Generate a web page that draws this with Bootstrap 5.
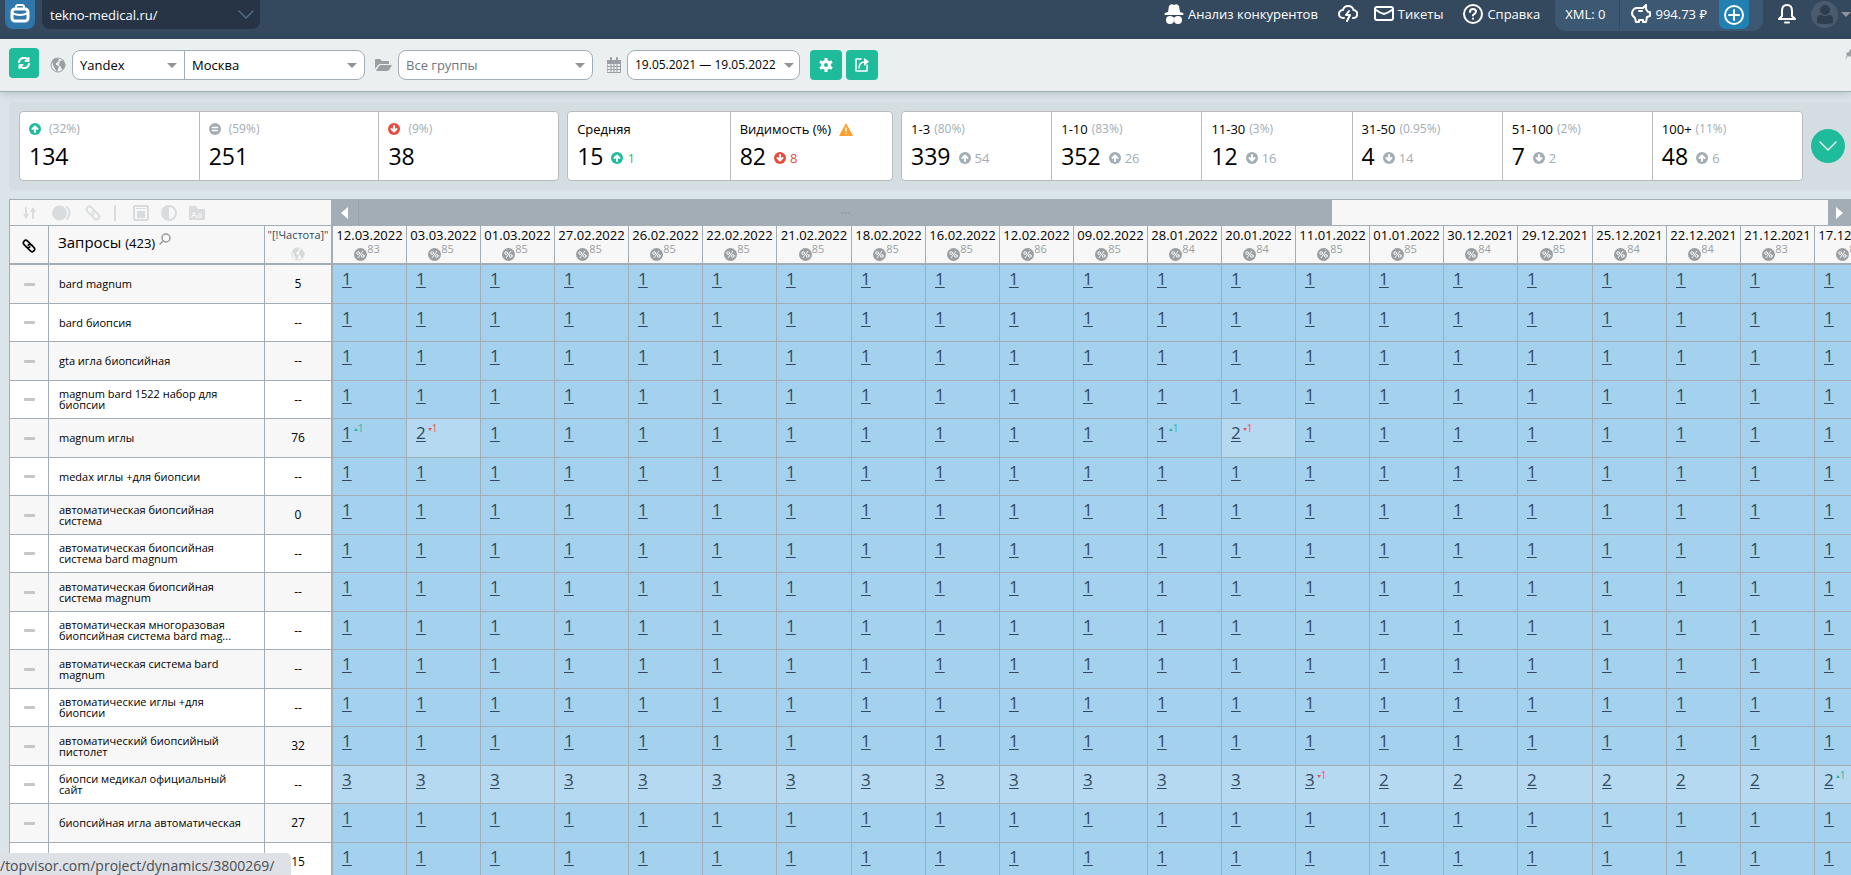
<!DOCTYPE html>
<html lang="ru">
<head>
<meta charset="utf-8">
<meta name="viewport" content="width=device-width, initial-scale=1">
<title>Динамика позиций</title>
<link href="https://cdn.jsdelivr.net/npm/bootstrap@5.3.0/dist/css/bootstrap.min.css" rel="stylesheet">
<style>
  :root { --line:#a2adb5; --teal:#1fbc9c; --navy:#34495e; }
  body { font-family:"Open Sans","Noto Sans",sans-serif; font-size:13px; line-height:18px; color:#000; background:#dbe4e9; }
  svg { display:block; flex:none; fill:none; stroke:currentColor; stroke-width:2; stroke-linecap:round; stroke-linejoin:round; }
  svg .solid { fill:currentColor; stroke:none; }
  button { border:0; padding:0; background:none; color:inherit; }
  .pick { appearance:none; border:0; background:transparent; padding:0; width:100%; outline:0; color:#000; }
  .tri { width:0; height:0; border:5px solid transparent; border-bottom:0; border-top-color:#8f9499; flex:none; pointer-events:none; }

  .topbar { height:39px; background:var(--navy); color:#fff; padding-left:5px; }
  .topbar a { color:#fff; text-decoration:none; }
  .topbar .band { height:28px; white-space:nowrap; }
  .home-btn { width:30px; height:29px; background:#2f76ab; border-radius:0 0 8px 8px; }
  .project { width:218px; height:29px; margin-left:7px; background:#263445; border-radius:0 0 8px 8px; padding:0 6px 0 8px; }
  .project .pick { color:#fff; }
  .project .chev { color:#4f6b88; }
  .project option { color:#000; }
  .menu { gap:20px; margin-right:15px; }
  .wallet { height:31px; background:#3d5872; border-radius:0 0 10px 10px; padding:0 14px 0 10px; }
  .wallet .sum { border-left:1px solid var(--navy); height:29px; padding-left:11px; margin-left:14px; gap:12px; }
  .plus-btn { width:30px; height:29px; background:#2181b3; border-radius:0 0 7px 7px; color:#fff; }
  .bell { margin:0 14px; }
  .avatar { width:27px; height:27px; margin:1px 3px 0 0; border-radius:50%; background:#4a5b6d; color:#2c3e50; overflow:hidden; }

  .filters { height:53px; background:#ebefef; border-bottom:1px solid #9fb0b3; box-shadow:0 2px 8px #00000026; padding:9px 0 0 9px; color:#9a9fa3; position:relative; }
  .filters .tuned { margin:2px 0 0 11px; gap:6px; }
  .sq-btn { height:30px; width:32px; background:var(--teal); color:#fff; border-radius:4px; }
  .sq-btn.refresh { width:30px; }
  .box { height:30px; border:1px solid var(--line); border-radius:8px; background:#fff; }
  .box > .part { padding:0 7px 0 7px; height:28px; flex:1 1 0; min-width:0; }
  .box > .part + .part { border-left:1px solid var(--line); }
  .box-place { width:293px; } .box-place > .engine { flex:0 0 111px; }
  .box-group { width:195px; } .box-group .pick { color:#71777c; }
  .box-dates { width:173px; } .box-dates .part { padding-right:5px; } .box-dates .pick { font-size:12px; }
  .pin { position:absolute; right:-5px; top:9px; }

  .summary { background:#d4dde2; margin:10px 0 0 9px; padding:9px 6px 9px 10px; border-radius:4px 0 0 4px; gap:8px; }
  .set { background:#fff; border:1px solid #bbb; border-radius:4px; height:70px; }
  .set > div { flex:1 1 0; padding:8px 0 0 9px; min-width:0; white-space:nowrap; }
  .set > div + div { border-left:1px solid #bbb; }
  .set-a { flex:540 1 0; } .set-b { flex:325 1 0; } .set-c { flex:903 1 0; }
  .pct { color:#a2adb5; font-size:12px; margin-left:4px; }
  .lbl { font-weight:500; }
  .big { font-size:23px; line-height:36px; font-weight:500; }
  .t-up { color:#1fbc9c; } .t-down { color:#e74c3c; } .t-mute { color:#a2adb5; } .t-warn { color:#ff9f30; }
  .more-btn { width:34px; height:34px; border-radius:50%; background:var(--teal); color:#fff; }

  .board { margin:9px 0 0 9px; border-left:1px solid var(--line); overflow:hidden; }
  .tools { height:27px; border-top:1px solid var(--line); border-bottom:1px solid var(--line); background:#f7f7f7; color:#d9dcde; }
  .tools .left { width:321px; padding-left:13px; gap:12px; flex:none; }
  .bar-thumb { background:var(--line); color:#8d979e; flex:974 1 0; }
  .bar-rest { flex:496 1 0; }
  .bar-end { background:var(--line); color:#fff; flex:none; }
  .bar-end.first { width:28px; border-right:1px solid #97a2a8; }
  .bar-end.last { width:23px; }

  .grid { table-layout:fixed; border-collapse:separate; border-spacing:0; width:1879px; }
  .w-check { width:39px; } .w-name { width:216px; } .w-freq { width:68px; } .w-day { width:74px; } .w-day:nth-child(10n) { width:75px; }
  .grid th, .grid td { border-right:1px solid var(--line); border-bottom:1px solid var(--line); padding:0; font-weight:400; overflow:hidden; }
  .grid thead th { height:39px; border-bottom-width:2px; background:#f7f7f7; vertical-align:top; }
  .grid .c-freq { border-right-width:2px; text-align:center; }
  .grid tbody tr { height:38px; background:#fff; }
  .grid tbody tr:nth-child(odd) { height:39px; background:#f7f7f7; }
  .grid tbody .c-name { font-size:11px; line-height:11px; padding:0 16px 1px 10px; vertical-align:middle; }
  .grid thead .c-name { font-size:15px; font-weight:500; padding:7px 0 0 9px; }
  .grid thead .c-name small { font-size:13px; }
  .grid thead .c-name svg { color:#999; }
  .grid thead .c-freq { font-size:11px; line-height:17px; color:#34495e; white-space:nowrap; }
  .grid thead .c-freq svg { color:#d5d8d9; }
  .grid tbody .c-freq { font-size:12px; vertical-align:middle; }
  .grid .day { text-align:center; white-space:nowrap; }
  .grid .vis { color:#9a9fa3; font-size:11px; line-height:10px; padding-right:5px; }
  .grid .pos { background:#a4d1ee; vertical-align:top; padding:3px 0 0 9px; line-height:22px; }
  .grid .pos.low { background:#b5d9f0; }
  .pos a { color:#34495e; font-size:17px; text-decoration:underline; text-underline-offset:2px; text-decoration-thickness:1px; }
  .delta { font-size:10px; line-height:10px; margin:1px 0 0 2px; }
  .delta::before { content:""; width:0; height:0; border:2px solid transparent; margin-top:5px; }
  .delta.up { color:#2fb5a0; } .delta.up::before { border-top:0; border-bottom:3px solid; }
  .delta.down { color:#f0525a; } .delta.down::before { border-bottom:0; border-top:3px solid; }
  .dash { width:11px; height:3px; background:#c4c6c7; border-radius:1px; margin:0 auto; }
  .status { position:fixed; left:0; bottom:0; width:291px; height:22px; background:#dee1e6; border-radius:0 5px 0 0; color:#4a4d51; font-size:14px; line-height:26px; z-index:5; white-space:nowrap; }
</style>
</head>
<body class="vh-100 overflow-hidden">

<svg width="0" height="0" class="position-absolute" aria-hidden="true">
  <symbol id="i-up" viewBox="0 0 12 12"><circle class="solid" cx="6" cy="6" r="6"/><path stroke="#fff" d="M6 9V4M3.500 6L6 3.500 8.500 6"/></symbol>
  <symbol id="i-down" viewBox="0 0 12 12"><circle class="solid" cx="6" cy="6" r="6"/><path stroke="#fff" d="M6 3v5M3.500 6L6 8.500 8.500 6"/></symbol>
  <symbol id="i-same" viewBox="0 0 12 12"><circle class="solid" cx="6" cy="6" r="6"/><path stroke="#fff" stroke-width="1.500" d="M3.500 4.500h5M3.500 7.500h5"/></symbol>
  <symbol id="i-globe" viewBox="0 0 16 16"><circle cx="8" cy="8" r="7" stroke-width="1"/><path class="solid" d="M2 4l3-3 4 1-1 3-2 1v2l3 1-1 3-1 3-2-3-2-4zM10 4l3-1 2 4-1 4-2 2-1-3-2-2z"/></symbol>
  <symbol id="i-pct" viewBox="0 0 14 14"><circle class="solid" cx="7" cy="7" r="7"/><path stroke="#fff" stroke-width="1" d="M9.500 3.500l-5 7"/><circle cx="4.500" cy="5.500" r="1.500" stroke="#fff" stroke-width="1"/><circle cx="9.500" cy="8.500" r="1.500" stroke="#fff" stroke-width="1"/></symbol>
  <symbol id="i-link" viewBox="0 0 18 18"><g transform="rotate(45 9 9)" stroke-width="1.800"><path d="M9 6.200H4a2.800 2.800 0 0 0 0 5.600h3.500M9 11.800h5a2.800 2.800 0 0 0 0-5.600h-3.500"/><path d="M7.500 11.800a2.800 2.800 0 0 0 2.800-2.800M10.500 6.200A2.800 2.800 0 0 0 7.700 9"/></g></symbol>
</svg>

<header class="topbar d-flex align-items-start">
  <button class="home-btn d-flex justify-content-center pt-1" aria-label="Проекты">
    <svg width="20" height="20" viewBox="0 0 20 20"><rect x="2" y="5" width="16" height="12" rx="3" stroke-width="3"/><path d="M6 4V3q0-2 2-2h4q2 0 2 2v1M2 9q8 4 16 0"/></svg>
  </button>
  <div class="project d-flex align-items-center">
    <select class="pick" aria-label="Проект"><option>tekno-medical.ru/</option></select>
    <svg class="chev" width="16" height="10" viewBox="0 0 16 10"><path stroke-width="1.500" d="M1 1l7 7 7-7"/></svg>
  </div>
  <nav class="d-flex align-items-start ms-auto" aria-label="Меню">
    <div class="menu d-flex">
      <a href="#" class="band d-flex align-items-center gap-1">
        <svg width="20" height="20" viewBox="0 0 20 20"><path class="solid" d="M5 2q2-3 5-1 3-2 5 1l1 6 3 1q1 1 0 2H1q-1-1 0-2l3-1z"/><circle class="solid" cx="6" cy="16" r="4"/><circle class="solid" cx="14" cy="16" r="4"/><path stroke-width="1" d="M8 14h4"/></svg>
        <span>Анализ конкурентов</span></a>
      <div class="d-flex gap-3">
        <a href="#" class="band d-flex align-items-center" aria-label="Обновления">
          <svg width="20" height="18" viewBox="0 0 20 18"><path d="M6 13H5a4 4 0 0 1 0-8q1-4 5-4 4.500 0 5.500 4A4 4 0 0 1 15 13"/><path d="M11 6l-3 4h4l-3 6"/></svg></a>
        <a href="#" class="band d-flex align-items-center gap-1">
          <svg width="20" height="16" viewBox="0 0 20 16"><rect x="1" y="1" width="18" height="13" rx="2"/><path d="M2 4q4 3 8 4 4-1 8-4"/></svg>
          <span>Тикеты</span></a>
      </div>
      <a href="#" class="band d-flex align-items-center gap-1">
        <svg width="20" height="20" viewBox="0 0 20 20"><circle cx="10" cy="10" r="9"/><path d="M7 8q0-3 3-3t3 2.500q0 1.500-3 3.500v.5M10 14.500v.2"/></svg>
        <span>Справка</span></a>
    </div>
    <div class="wallet d-flex align-items-start">
      <a href="#" class="band d-flex align-items-center">XML: 0</a>
      <div class="sum d-flex">
        <a href="#" class="band d-flex align-items-center gap-1">
          <svg width="20" height="20" viewBox="0 0 20 20"><path d="M6 4h6l3-3v4l2 3h2v4l-3 1-1 5h-3v-2H8v2H5l-1-4Q1 12 1 9q1-5 5-5zM8 7h3"/></svg>
          <span>994.73 ₽</span></a>
        <button class="plus-btn d-flex justify-content-center align-items-center" aria-label="Пополнить"><svg width="20" height="20" viewBox="0 0 20 20"><circle cx="10" cy="10" r="9"/><path d="M10 5v10M5 10h10"/></svg></button>
      </div>
    </div>
    <button class="band bell d-flex align-items-center" aria-label="Уведомления"><svg width="20" height="20" viewBox="0 0 20 20"><path d="M10 1Q5 1 5 7v5l-3 3h16l-3-3V7q0-6-5-6zM8 18.500h4"/></svg></button>
    <button class="avatar d-flex justify-content-center" aria-label="Профиль"><svg width="20" height="27" viewBox="0 0 20 27"><circle class="solid" cx="10" cy="9" r="5"/><path class="solid" d="M2 22v-4q0-4 4-4 4 2 8 0 4 0 4 4v4q-8 2-16 0z"/></svg></button>
    <span class="band d-flex align-items-center"><span class="tri"></span></span>
  </nav>
</header>

<section class="filters d-flex align-items-start" aria-label="Фильтры">
  <button class="sq-btn refresh d-flex align-items-center justify-content-center" aria-label="Обновить"><svg width="12" height="12" viewBox="0 0 12 12"><path d="M1 5a5 5 0 0 1 9-2M11 7a5 5 0 0 1-9 2M10.500 1v3h-3M1.500 11V8h3"/></svg></button>
  <div class="tuned d-flex align-items-center">
    <svg width="16" height="16"><use href="#i-globe"/></svg>
    <div class="box box-place d-flex">
      <div class="part engine d-flex align-items-center"><select class="pick" aria-label="Поисковик"><option>Yandex</option></select><span class="tri"></span></div>
      <div class="part d-flex align-items-center"><select class="pick" aria-label="Регион"><option>Москва</option></select><span class="tri"></span></div>
    </div>
    <svg class="ms-1" width="17" height="14" viewBox="0 0 17 14"><path class="solid" d="M0 11V2q0-1 1-1h4l2 2h6q1 0 1 1v2H5q-1 0-2 1zM1 13l3-5q1-1 2-1h11l-3 5q-1 1-2 1z"/></svg>
    <div class="box box-group d-flex"><div class="part d-flex align-items-center"><select class="pick" aria-label="Группа"><option>Все группы</option></select><span class="tri"></span></div></div>
    <svg class="ms-2" width="14" height="16" viewBox="0 0 14 16"><path stroke-width="1" d="M.5 3.500h13v12H.5zM.5 6.500h13M.5 9.500h13M.5 12.500h13M4 6v9M7 6v9M10 6v9"/><path class="solid" d="M0 3h14v3H0z"/><path d="M4 1v3M10 1v3"/></svg>
    <div class="box box-dates d-flex"><div class="part d-flex align-items-center"><select class="pick" aria-label="Период"><option>19.05.2021 — 19.05.2022</option></select><span class="tri"></span></div></div>
    <div class="d-flex gap-1 ms-1">
      <button class="sq-btn d-flex align-items-center justify-content-center" aria-label="Настройки"><svg width="14" height="14" viewBox="0 0 14 14"><circle cx="7" cy="7" r="3.500" stroke-width="3"/><path stroke-width="3" stroke-linecap="butt" d="M7 0v3M7 11v3M1 3.500l2.500 1.500M10.500 9l2.500 1.500M1 10.500L3.500 9M10.500 5L13 3.500"/></svg></button>
      <button class="sq-btn d-flex align-items-center justify-content-center" aria-label="Экспорт"><svg width="16" height="16" viewBox="0 0 16 16"><path stroke-width="1.500" d="M7 2H2v12h11V8"/><path stroke-width="1.500" d="M5 11q0-6 6-6"/><path class="solid" d="M10 1l5 3.500L10 9z"/></svg></button>
    </div>
  </div>
  <svg class="pin" width="11" height="12" viewBox="0 0 11 12"><path class="solid" d="M5 1l5 5-1 1-2-.5L5 9 3 8l-3 4 2-5-1-2 3-1z"/></svg>
</section>

<section class="summary d-flex align-items-center" aria-label="Сводка">
  <div class="set set-a d-flex" id="setA"></div>
  <div class="set set-b d-flex" id="setB"></div>
  <div class="set set-c d-flex" id="setC"></div>
  <button class="more-btn d-flex align-items-center justify-content-center" aria-label="Развернуть"><svg width="18" height="10" viewBox="0 0 18 10"><path stroke-width="1.200" d="M1 1l8 8 8-8"/></svg></button>
</section>

<main class="board">
  <div class="tools d-flex align-items-stretch">
    <div class="left d-flex align-items-center">
      <svg width="17" height="14" viewBox="0 0 17 14"><path d="M3 2v8M10 12V4"/><path class="solid" d="M0 8h6l-3 5zM7 6h6l-3-5z"/></svg>
      <svg width="20" height="16" viewBox="0 0 20 16"><circle class="solid" cx="7.500" cy="8" r="7.500"/><path d="M15 2q5 6 0 12"/></svg>
      <svg width="18" height="18"><use href="#i-link"/></svg>
      <svg width="7" height="16" viewBox="0 0 7 16"><path d="M1 1v14"/></svg>
      <svg width="16" height="16" viewBox="0 0 16 16"><rect x="1" y="1" width="14" height="14" rx="1"/><path class="solid" d="M3 3h10v1H3zM4 6h8v7H4z"/></svg>
      <svg width="16" height="16" viewBox="0 0 16 16"><circle cx="8" cy="8" r="7"/><path class="solid" d="M8 1a7 7 0 0 0 0 14z"/></svg>
      <svg width="16" height="16" viewBox="0 0 16 16"><path class="solid" d="M0 1h7l2 3h7v11H0z"/><text x="2" y="13" font-size="9" font-weight="600" stroke="none" fill="#f7f7f7">Aa</text></svg>
    </div>
    <button class="bar-end first d-flex align-items-center justify-content-center" aria-label="Назад"><svg width="7" height="12" viewBox="0 0 7 12"><path class="solid" d="M7 0v12L0 6z"/></svg></button>
    <div class="bar-thumb d-flex align-items-center justify-content-center">···</div>
    <div class="bar-rest"></div>
    <button class="bar-end last d-flex align-items-center justify-content-center" aria-label="Вперёд"><svg width="7" height="12" viewBox="0 0 7 12"><path class="solid" d="M0 0v12l7-6z"/></svg></button>
  </div>
  <table class="grid">
    <colgroup id="cols"><col class="w-check"><col class="w-name"><col class="w-freq"></colgroup>
    <thead><tr id="head">
      <th scope="col"><svg class="mx-auto mt-2 pt-1" width="16" height="20" viewBox="0 0 18 18"><use href="#i-link" width="18" height="18"/></svg></th>
      <th scope="col" class="c-name"><div class="d-flex gap-1"><span>Запросы <small>(423)</small></span><svg width="12" height="12" viewBox="0 0 12 12"><circle cx="7" cy="5" r="4" stroke-width="1.500"/><path stroke-width="1.500" d="M4 8l-3 3"/></svg></div></th>
      <th scope="col" class="c-freq">"[!Частота]"<svg class="mx-auto mt-1" width="14" height="14"><use href="#i-globe"/></svg></th>
    </tr></thead>
    <tbody id="rows"></tbody>
  </table>
</main>

<div class="status">/topvisor.com/project/dynamics/3800269/</div>

<script>
  const icon = (name, cls, size = 12) => `<svg class="${cls}" width="${size}" height="${size}"><use href="#i-${name}"/></svg>`;

  const card = ({ label = '', lead = '', pct = '', warn, value, dir, diff, tone = 't-mute' }) => `
    <div><div class="d-flex align-items-center lbl">${lead}${label}${pct && `<span class="pct fw-normal">(${pct})</span>`}${warn || ''}</div>
    <div class="d-flex align-items-center"><span class="big">${value}</span>${dir ? `${icon(dir, 'ms-2 mt-1 ' + tone)}<span class="ms-1 mt-1 ${tone}">${diff}</span>` : ''}</div></div>`;
  const warnIcon = '<svg class="t-warn ms-2" width="14" height="13" viewBox="0 0 14 13"><path class="solid" d="M7 0l7 13H0z"/><path stroke="#fff" stroke-width="1.500" d="M7 5v3M7 10.500v.1"/></svg>';
  document.getElementById('setA').innerHTML = [
    { lead: icon('up', 't-up me-1'), pct: '32%', value: 134 },
    { lead: icon('same', 't-mute me-1'), pct: '59%', value: 251 },
    { lead: icon('down', 't-down me-1'), pct: '9%', value: 38 }].map(card).join('');
  document.getElementById('setB').innerHTML = [
    { label: 'Средняя', value: 15, dir: 'up', diff: 1, tone: 't-up' },
    { label: 'Видимость (%)', warn: warnIcon, value: 82, dir: 'down', diff: 8, tone: 't-down' }].map(card).join('');
  document.getElementById('setC').innerHTML = [
    ['1-3', '80%', 339, 'up', 54], ['1-10', '83%', 352, 'up', 26], ['11-30', '3%', 12, 'down', 16],
    ['31-50', '0.95%', 4, 'down', 14], ['51-100', '2%', 7, 'down', 2], ['100+', '11%', 48, 'up', 6]
  ].map(([label, pct, value, dir, diff]) => card({ label, pct, value, dir, diff })).join('');

  const days = [['12.03.2022', 83], ['03.03.2022', 85], ['01.03.2022', 85], ['27.02.2022', 85], ['26.02.2022', 85],
    ['22.02.2022', 85], ['21.02.2022', 85], ['18.02.2022', 85], ['16.02.2022', 85], ['12.02.2022', 86], ['09.02.2022', 85],
    ['28.01.2022', 84], ['20.01.2022', 84], ['11.01.2022', 85], ['01.01.2022', 85], ['30.12.2021', 84], ['29.12.2021', 85],
    ['25.12.2021', 84], ['22.12.2021', 84], ['21.12.2021', 83], ['17.12.2021', 83]];
  document.getElementById('cols').insertAdjacentHTML('beforeend', days.map(() => '<col class="w-day">').join(''));
  document.getElementById('head').insertAdjacentHTML('beforeend', days.map(([d, v]) =>
    `<th scope="col" class="day">${d}<div class="vis d-flex justify-content-center">${icon('pct', 'mt-1', 13)}<span>${v}</span></div></th>`).join(''));

  const none = {};
  const rows = [
    ['bard magnum', '5'], ['bard биопсия', '--'], ['gta игла биопсийная', '--'],
    ['magnum bard 1522 набор для биопсии', '--'],
    ['magnum иглы', '76', { 0: [1, 'up'], 1: [2, 'down'], 11: [1, 'up'], 12: [2, 'down'] }],
    ['medax иглы +для биопсии', '--'], ['автоматическая биопсийная система', '0'],
    ['автоматическая биопсийная система bard magnum', '--'],
    ['автоматическая биопсийная система magnum', '--'],
    ['автоматическая многоразовая биопсийная система bard mag...', '--'],
    ['автоматическая система bard magnum', '--'], ['автоматические иглы +для биопсии', '--'],
    ['автоматический биопсийный пистолет', '32'],
    ['биопси медикал официальный сайт', '--', { 13: [3, 'down'], 20: [2, 'up'] }, i => i < 14 ? 3 : 2],
    ['биопсийная игла автоматическая', '27'], ['', '15']
  ];
  document.getElementById('rows').innerHTML = rows.map(([name, freq, marks = none, base = () => 1]) => `<tr>
    <td class="align-middle"><div class="dash"></div></td><td class="c-name">${name}</td><td class="c-freq">${freq}</td>` +
    days.map((_, i) => {
      const [n, way] = marks[i] || [base(i)];
      return `<td class="pos${n > 1 ? ' low' : ''}"><div class="d-flex align-items-start"><a href="#">${n}</a>${way ? `<span class="delta d-flex ${way}">1</span>` : ''}</div></td>`;
    }).join('') + '</tr>').join('');
</script>
<script src="https://cdn.jsdelivr.net/npm/bootstrap@5.3.0/dist/js/bootstrap.bundle.min.js"></script>
</body>
</html>
